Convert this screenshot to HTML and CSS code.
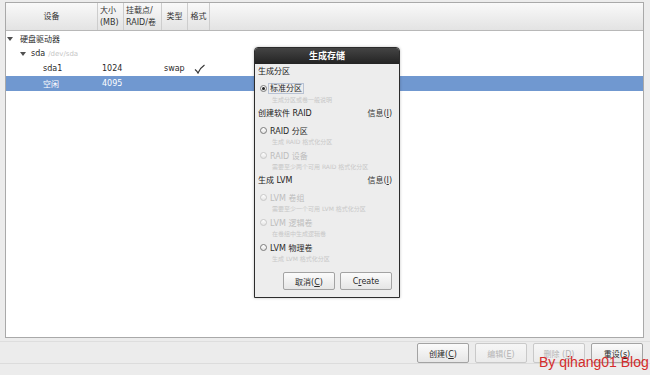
FILE: index.html
```html
<!DOCTYPE html>
<html>
  <head>
    <link rel="stylesheet" href="styles.css">
  </head>
  <body>
    <div class="screen">
      <div class="tree">
        <div class="tree-head">
          <div class="col col-dev">设备</div>
          <div class="col col-size">大小<br>(MB)</div>
          <div class="col col-mount">挂载点/<br>RAID/卷</div>
          <div class="col col-type">类型</div>
          <div class="col col-fmt">格式</div>
          <div class="col col-rest"></div>
        </div>
        <div class="tree-body">
          <div class="row">
            <div class="cell cell-dev lvl-0"><span class="expander"></span>硬盘驱动器</div>
          </div>
          <div class="row">
            <div class="cell cell-dev lvl-1"><span class="expander"></span><span>sda</span><span class="path">/dev/sda</span></div>
          </div>
          <div class="row">
            <div class="cell cell-dev lvl-2">sda1</div>
            <div class="cell cell-size">1024</div>
            <div class="cell cell-mount"></div>
            <div class="cell cell-type">swap</div>
            <div class="cell cell-fmt">
              <svg width="11" height="10" viewBox="0 0 11 10"><path d="M1 5.5 Q3 7 4 9 Q6 4 10.5 1" fill="none" stroke="#333" stroke-width="1.2"/></svg>
            </div>
          </div>
          <div class="row selected">
            <div class="cell cell-dev lvl-2">空闲</div>
            <div class="cell cell-size">4095</div>
          </div>
        </div>
      </div>

      <div class="actions">
        <button class="btn"><span>创建(<u>C</u>)</span></button>
        <button class="btn" disabled><span>编辑(<u>E</u>)</span></button>
        <button class="btn" disabled><span>删除 (<u>D</u>)</span></button>
        <button class="btn"><span>重设(<u>s</u>)</span></button>
      </div>

      <div class="dialog">
        <div class="dialog-title">生成存储</div>
        <div class="dialog-body">
          <div class="section">生成分区</div>
          <div class="option first">
            <span class="radio checked"></span><span class="label focus">标准分区</span>
          </div>
          <div class="hint">生成分区或卷一般说明</div>

          <div class="section">
            <span>创建软件 RAID</span><span class="info">信息(<u>I</u>)</span>
          </div>
          <div class="option first">
            <span class="radio"></span><span class="label">RAID 分区</span>
          </div>
          <div class="hint">生成 RAID 格式化分区</div>
          <div class="option disabled">
            <span class="radio"></span><span class="label">RAID 设备</span>
          </div>
          <div class="hint">需要至少两个可用 RAID 格式化分区</div>

          <div class="section">
            <span>生成 LVM</span><span class="info">信息(<u>I</u>)</span>
          </div>
          <div class="option first disabled">
            <span class="radio"></span><span class="label">LVM 卷组</span>
          </div>
          <div class="hint">需要至少一个可用 LVM 格式化分区</div>
          <div class="option disabled">
            <span class="radio"></span><span class="label">LVM 逻辑卷</span>
          </div>
          <div class="hint">在卷组中生成逻辑卷</div>
          <div class="option">
            <span class="radio"></span><span class="label">LVM 物理卷</span>
          </div>
          <div class="hint">生成 LVM 格式化分区</div>

          <div class="dialog-actions">
            <button class="btn small"><span>取消(<u>C</u>)</span></button>
            <button class="btn small"><span>C<u>r</u>eate</span></button>
          </div>
        </div>
      </div>

      <div class="watermark">By qihang01 Blog</div>
    </div>
  </body>
</html>
```

FILE: styles.css
```css
body {
  margin: 0;
  background-color: #ececec;
  font-family: "DejaVu Sans", "Noto Sans CJK SC", sans-serif;
  font-size: 8px;
  color: #2a2a2a;
}
.screen {
  position: relative;
  width: 650px;
  height: 375px;
  overflow: hidden;
  padding-top: 2px;
  box-sizing: border-box;
}
.tree {
  margin: 0 6px 0 5px;
  height: 336px;
  box-sizing: border-box;
  border: 1px solid #a9a9a9;
  background-color: #fff;
}
.tree-head {
  display: flex;
  height: 28px;
  box-sizing: border-box;
  border-bottom: 1px solid #b8b8b8;
  background: linear-gradient(#f9f9f9, #e3e3e3);
}
.col {
  display: flex;
  align-items: center;
  justify-content: center;
  text-align: center;
  line-height: 12px;
  border-right: 1px solid #cdcdcd;
  box-sizing: border-box;
  color: #333;
}
.col-dev { width: 92px; }
.col-size { width: 26px; justify-content: flex-start; text-align: left; padding-left: 2px; }
.col-mount { width: 38px; justify-content: flex-start; text-align: left; padding-left: 2px; }
.col-type { width: 26px; }
.col-fmt { width: 22px; }
.col-rest { flex: 1; border-right: none; }

.row {
  display: flex;
  height: 15px;
  align-items: center;
}
.row.selected {
  background-color: #7098d0;
  color: #fff;
}
.cell {
  box-sizing: border-box;
  white-space: nowrap;
  display: flex;
  align-items: center;
}
.cell-dev { width: 92px; }
.cell-size { width: 26px; padding-left: 4px; }
.cell-mount { width: 38px; }
.cell-type { width: 26px; padding-left: 2px; }
.cell-fmt { width: 22px; padding-left: 6px; }
.lvl-0 { padding-left: 1px; }
.lvl-1 { padding-left: 14px; }
.lvl-2 { padding-left: 37px; }
.expander {
  width: 0;
  height: 0;
  border-left: 3px solid transparent;
  border-right: 3px solid transparent;
  border-top: 4px solid #505050;
  margin-right: 7px;
}
.lvl-1 .expander { margin-right: 5px; }
.path {
  font-size: 7px;
  color: #c6c6c6;
  margin-left: 3px;
}

.actions {
  display: flex;
  justify-content: flex-end;
  gap: 6px;
  margin-top: 3px;
  padding: 1px 7px 0 0;
  border-top: 1px solid #dedede;
  border-bottom: 1px solid #dcdcdc;
  height: 20px;
}
.btn {
  width: 52px;
  height: 20px;
  padding: 0;
  border: 1px solid #a3a3a3;
  border-radius: 2px;
  background: linear-gradient(#fbfbfb, #e6e6e6);
  font-family: "DejaVu Sans", "Noto Sans CJK SC", sans-serif;
  font-size: 8px;
  color: #2a2a2a;
}
.btn:disabled {
  color: #b5b5b5;
  border-color: #c9c9c9;
  background: linear-gradient(#f6f6f6, #ebebeb);
}
.btn.small {
  width: 52px;
  height: 18px;
}

.dialog {
  position: absolute;
  left: 254px;
  top: 47px;
  width: 144px;
  border: 1px solid #2c2c2c;
  border-radius: 4px 4px 0 0;
  background-color: #ededed;
  box-shadow: 0 0 3px rgba(0, 0, 0, 0.25);
}
.dialog-title {
  height: 16px;
  line-height: 16px;
  text-align: center;
  font-size: 9px;
  font-weight: bold;
  color: #fff;
  border-radius: 3px 3px 0 0;
  background: linear-gradient(#444, #232323);
}
.dialog-body {
  padding: 2px 7px 7px 3px;
}
.section {
  display: flex;
  justify-content: space-between;
  line-height: 12px;
  margin-top: 3px;
  color: #222;
}
.section:first-child {
  margin-top: 0;
}
.option.first {
  margin-top: 4px;
}
.option {
  display: flex;
  align-items: center;
  height: 12px;
  margin-top: 2px;
}
.radio {
  width: 7px;
  height: 7px;
  box-sizing: border-box;
  margin-left: 2px;
  margin-right: 3px;
  border: 1px solid #7a7a7a;
  border-radius: 50%;
  background: linear-gradient(#fff, #e4e4e4);
  display: flex;
  align-items: center;
  justify-content: center;
}
.radio.checked::after {
  content: "";
  width: 3px;
  height: 3px;
  border-radius: 50%;
  background-color: #222;
}
.label.focus {
  border: 1px solid #b8c2d4;
  padding: 0 1px;
  margin-left: -2px;
  line-height: 9px;
}
.option.disabled {
  color: #bdbdbd;
}
.option.disabled .radio {
  border-color: #c8c8c8;
}
.hint {
  padding-left: 14px;
  line-height: 11px;
  font-size: 6px;
  color: #c8c8c8;
  white-space: nowrap;
}
.info {
  color: #333;
}
.dialog-actions {
  display: flex;
  justify-content: flex-end;
  gap: 5px;
  margin-top: 8px;
}

.watermark {
  position: absolute;
  left: 539px;
  top: 354px;
  font-family: "Liberation Sans", Arial, sans-serif;
  font-size: 14px;
  color: #d42b2b;
}
```
